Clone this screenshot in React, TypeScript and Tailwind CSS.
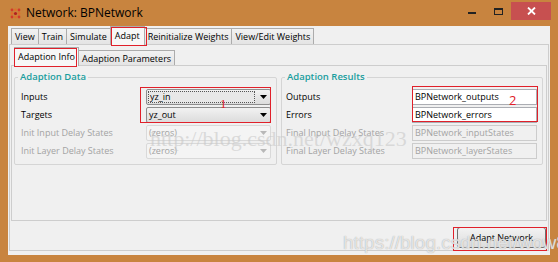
import React from 'react'

const font = { fontFamily: '"Open Sans", "Noto Sans", Arial, sans-serif' }

function Arrow({ disabled }: { disabled?: boolean }) {
  return (
    <svg width="7" height="4" viewBox="0 0 7 4" className="shrink-0">
      <path d="M0 0 L7 0 L3.5 4 Z" fill={disabled ? '#b8b8b8' : '#000'} />
    </svg>
  )
}

function Combo({ value, disabled, focused }: { value: string; disabled?: boolean; focused?: boolean }) {
  return (
    <div
      className={`flex items-center h-[16px] w-[125px] border rounded-[2px] pl-[1px] pr-[3px] ${
        disabled
          ? 'border-[#d9d9d9] bg-[#f4f4f4] text-[#a3a3a3]'
          : 'border-[#8e8e8e] bg-gradient-to-b from-[#f2f2f2] to-[#dcdcdc] text-black'
      }`}
    >
      <div
        className={`flex-1 h-[12px] flex items-center pl-[1px] mr-[5px] ${
          focused ? 'border border-dotted border-[#555] bg-[#e8e8e8]' : ''
        }`}
      >
        {value}
      </div>
      <Arrow disabled={disabled} />
    </div>
  )
}

function Field({ value, disabled }: { value: string; disabled?: boolean }) {
  return (
    <div
      className={`flex items-center h-[16px] w-[125px] border px-[2px] ${
        disabled ? 'border-[#cccccc] bg-[#f0f0f0] text-[#a3a3a3]' : 'border-[#abadb3] bg-white text-black'
      }`}
    >
      {value}
    </div>
  )
}

function Row({ label, disabled, children, labelW }: { label: string; disabled?: boolean; children: React.ReactNode; labelW: string }) {
  return (
    <div className="flex items-center h-[16px]">
      <div className={`${labelW} ${disabled ? 'text-[#a3a3a3]' : 'text-black'}`}>{label}</div>
      {children}
    </div>
  )
}

function Group({ title, children, className }: { title: string; children: React.ReactNode; className: string }) {
  return (
    <div className={`relative border border-[#d5d5d5] rounded-[2px] h-[88px] ${className}`}>
      <div className="absolute -top-[8px] left-[3px] px-[2px] bg-[#f0f0f0] text-[#1a9e9e] font-semibold text-[9.5px] leading-[14px]">
        {title}
      </div>
      {children}
    </div>
  )
}

export default function App() {
  const tabs = ['View', 'Train', 'Simulate', 'Adapt', 'Reinitialize Weights', 'View/Edit Weights']
  return (
    <div className="w-[558px] h-[262px] bg-[#c8843f] flex flex-col overflow-hidden relative" style={font}>
      {/* title bar */}
      <div className="h-[26px] flex items-start shrink-0">
        <div className="flex items-center h-[26px] pl-[10px] gap-[5px] flex-1">
          <svg width="11" height="11" viewBox="0 0 11 11">
            <circle cx="2" cy="2" r="1.4" fill="#d23a2a" />
            <circle cx="5.5" cy="2" r="1.4" fill="#e0702a" />
            <circle cx="9" cy="2" r="1.4" fill="#d23a2a" />
            <circle cx="2" cy="5.5" r="1.4" fill="#e0702a" />
            <circle cx="5.5" cy="5.5" r="1.6" fill="#b02020" />
            <circle cx="9" cy="5.5" r="1.4" fill="#e0702a" />
            <circle cx="2" cy="9" r="1.4" fill="#d23a2a" />
            <circle cx="5.5" cy="9" r="1.4" fill="#e0702a" />
            <circle cx="9" cy="9" r="1.4" fill="#d23a2a" />
          </svg>
          <span className="text-[12px] text-black leading-none">Network: BPNetwork</span>
        </div>
        <div className="flex items-start pt-[2px] pr-[7px]">
          <div className="w-[26px] h-[18px] flex items-center justify-center">
            <div className="w-[8px] h-[2px] bg-[#222] mt-[4px]" />
          </div>
          <div className="w-[26px] h-[18px] flex items-center justify-center">
            <div className="w-[9px] h-[7px] border border-[#222] border-t-2" />
          </div>
          <div className="w-[40px] h-[18px] bg-[#c75050] flex items-center justify-center">
            <svg width="9" height="8" viewBox="0 0 9 8">
              <path d="M1 0.5 L8 7.5 M8 0.5 L1 7.5" stroke="#fff" strokeWidth="1.8" />
            </svg>
          </div>
        </div>
      </div>

      {/* client */}
      <div className="mx-[8px] h-[229px] bg-[#f0f0f0] flex flex-col text-[9px]">
        {/* main tabs */}
        <div className="flex items-end h-[19px] pl-[3px] shrink-0">
          {tabs.map(t => (
            <div
              key={t}
              className={`px-[3px] flex items-center border border-[#acacac] border-b-0 -mr-px ${
                t === 'Adapt'
                  ? 'h-[19px] bg-[#f7f7f7] relative z-10 px-[4px]'
                  : 'h-[17px] bg-gradient-to-b from-[#f2f2f2] to-[#e3e3e3]'
              }`}
            >
              {t}
            </div>
          ))}
        </div>
        {/* tab panel */}
        <div className="ml-[1px] mr-[1px] h-[207px] border border-[#cdcdcd] bg-[#f0f0f0] flex flex-col -mt-px">
          {/* sub tabs */}
          <div className="flex items-end h-[21px] pl-[4px] pt-[2px] shrink-0">
            <div className="h-[19px] px-[3px] flex items-center border border-[#acacac] border-b-0 bg-[#f7f7f7] relative z-10">
              Adaption Info
            </div>
            <div className="h-[16px] px-[3px] flex items-center border border-[#acacac] border-b-0 border-l-0 bg-gradient-to-b from-[#f2f2f2] to-[#e3e3e3]">
              Adaption Parameters
            </div>
          </div>
          <div className="ml-[1px] mr-[1px] h-[156px] border border-[#cdcdcd] -mt-px flex gap-[4px] pt-[11px] pl-[2px] pr-[3px]">
            <Group title="Adaption Data" className="w-[264px]">
              <div className="flex flex-col gap-[2px] pt-[11px] pl-[6px]">
                <Row label="Inputs" labelW="w-[125px]"><Combo value="yz_in" focused /></Row>
                <Row label="Targets" labelW="w-[125px]"><Combo value="yz_out" /></Row>
                <Row label="Init Input Delay States" labelW="w-[125px]" disabled><Combo value="(zeros)" disabled /></Row>
                <Row label="Init Layer Delay States" labelW="w-[125px]" disabled><Combo value="(zeros)" disabled /></Row>
              </div>
            </Group>
            <Group title="Adaption Results" className="w-[263px]">
              <div className="flex flex-col gap-[2px] pt-[11px] pl-[4px]">
                <Row label="Outputs" labelW="w-[126px]"><Field value="BPNetwork_outputs" /></Row>
                <Row label="Errors" labelW="w-[126px]"><Field value="BPNetwork_errors" /></Row>
                <Row label="Final Input Delay States" labelW="w-[126px]" disabled><Field value="BPNetwork_inputStates" disabled /></Row>
                <Row label="Final Layer Delay States" labelW="w-[126px]" disabled><Field value="BPNetwork_layerStates" disabled /></Row>
              </div>
            </Group>
          </div>
          <div className="flex justify-end pr-[2px] pt-[6px]">
            <div className="w-[89px] h-[21px] border border-[#707070] rounded-[3px] bg-gradient-to-b from-[#f2f2f2] to-[#dddddd] flex items-center justify-center">
              Adapt Network
            </div>
          </div>
        </div>
      </div>

      {/* annotations */}
      <div className="absolute left-[111px] top-[27px] w-[36px] h-[19px] border border-[#e0202a] z-20" />
      <div className="absolute left-[14px] top-[48px] w-[63px] h-[19px] border border-[#e0202a] z-20" />
      <div className="absolute left-[140px] top-[87px] w-[131px] h-[36px] border border-[#e0202a] z-20" />
      <div className="absolute left-[220px] top-[97px] text-[13px] text-[#e0202a] leading-none z-20" style={{ fontFamily: '"Liberation Serif", serif' }}>1</div>
      <div className="absolute left-[412px] top-[86px] w-[126px] h-[36px] border border-[#e0202a] z-20" />
      <div className="absolute left-[509px] top-[94px] text-[13px] text-[#e0202a] leading-none z-20">2</div>
      <div className="absolute left-[453px] top-[227px] w-[94px] h-[24px] border border-[#e0202a] z-20" />

      {/* watermarks */}
      <div className="absolute left-[150px] top-[128px] text-[22px] text-[#c8c8c8]/60 leading-none z-30" style={{ fontFamily: '"Liberation Serif", serif' }}>
        http://blog.csdn.net/wzxq123
      </div>
      <div className="absolute left-[343px] top-[233px] text-[19px] text-white/70 leading-none z-30 whitespace-nowrap" style={{ fontFamily: '"Liberation Sans", Arial, sans-serif', textShadow: '0 0 1px #999' }}>
        https://blog.csdn.net/wow8252
      </div>
    </div>
  )
}
